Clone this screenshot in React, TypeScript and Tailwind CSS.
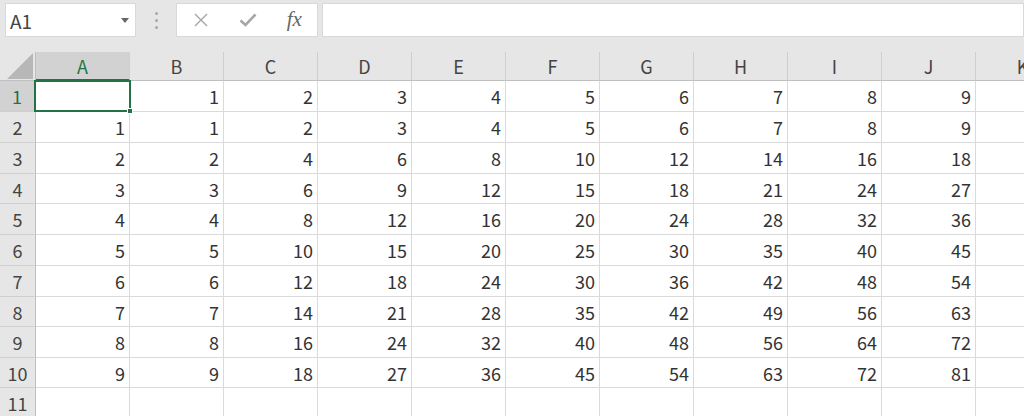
import React from "react";

const COLS = ["A", "B", "C", "D", "E", "F", "G", "H", "I", "J", "K"];
const ROW_H = ["h-[31px]", "h-[31px]", "h-[31px]", "h-[30px]", "h-[31px]", "h-[31px]", "h-[31px]", "h-[30px]", "h-[31px]", "h-[30px]", "h-[31px]"];

function cellValue(r: number, c: number): string {
  // r: 1..11, c: 0..10 (A..K)
  if (r === 11 || c === 10) return "";
  if (r === 1) return c === 0 ? "" : String(c);
  const a = r - 1;
  if (c === 0) return String(a);
  return String(a * c);
}

function XIcon() {
  return (
    <svg width="16" height="16" viewBox="0 0 16 16">
      <path d="M2 2 L14 14 M14 2 L2 14" stroke="#a6a6a6" strokeWidth="1.4" fill="none" />
    </svg>
  );
}

function CheckIcon() {
  return (
    <svg width="18" height="16" viewBox="0 0 18 16">
      <path d="M1.5 8.5 L6.5 13 L16.5 2.5" stroke="#a6a6a6" strokeWidth="2.6" fill="none" strokeLinejoin="miter" />
    </svg>
  );
}

export default function App() {
  return (
    <div className="w-[1024px] h-[416px] overflow-hidden bg-[#e6e6e6] font-['Noto_Sans_CJK_JP','Noto_Sans',sans-serif] select-none">
      {/* Top bar */}
      <div className="h-[52px] flex items-start pt-[3px]">
        <div className="ml-[5px] w-[131px] h-[34px] bg-white border border-[#d9d9d9] flex items-center justify-between pl-[4px] pr-[6px]">
          <span className="text-[19px] leading-none text-[#444]">A1</span>
          <svg width="8" height="5" viewBox="0 0 8 5">
            <path d="M0 0 L8 0 L4 5 Z" fill="#666" />
          </svg>
        </div>
        <div className="w-[40px] h-[34px] flex flex-col items-center justify-center gap-[4px]">
          <span className="w-[3px] h-[3px] rounded-full bg-[#a8a8a8]" />
          <span className="w-[3px] h-[3px] rounded-full bg-[#a8a8a8]" />
          <span className="w-[3px] h-[3px] rounded-full bg-[#a8a8a8]" />
        </div>
        <div className="w-[142px] h-[34px] bg-white border border-[#d9d9d9] flex items-center">
          <div className="w-[48px] flex justify-center">
            <XIcon />
          </div>
          <div className="w-[48px] flex justify-center">
            <CheckIcon />
          </div>
          <div className="w-[46px] flex justify-center">
            <span className="font-['Liberation_Serif',serif] italic text-[21px] leading-none text-[#666] -mt-[2px]">fx</span>
          </div>
        </div>
        <div className="ml-[4px] flex-1 h-[34px] bg-white border border-[#d9d9d9]" />
      </div>

      {/* Grid */}
      <div className="flex flex-col">
        {/* Column header */}
        <div className="h-[29px] flex">
          <div className="w-[36px] shrink-0 h-full border-r border-b border-[#bfbfbf] bg-[#e6e6e6] flex items-end justify-end pr-[2px] pb-[1px]">
            <svg width="26" height="26" viewBox="0 0 26 26">
              <path d="M26 0 L26 26 L0 26 Z" fill="#b7b7b7" />
            </svg>
          </div>
          {COLS.map((c, i) => (
            <div
              key={c}
              className={
                i === 0
                  ? "w-[94px] shrink-0 h-full border-r border-r-[#cfcfcf] border-b-2 border-b-[#217346] bg-[#d2d2d2] flex items-center justify-center text-[18px] leading-none text-[#217346]"
                  : "w-[94px] shrink-0 h-full border-r border-r-[#cfcfcf] border-b border-b-[#bfbfbf] bg-[#e6e6e6] flex items-center justify-center text-[18px] leading-none text-[#444]"
              }
            >
              {c}
            </div>
          ))}
        </div>

        {ROW_H.map((h, ri) => {
          const r = ri + 1;
          return (
            <div key={r} className={`${h} flex bg-white`}>
              <div
                className={
                  r === 1
                    ? "w-[36px] shrink-0 h-full border-r-2 border-r-[#217346] border-b border-b-[#cfcfcf] bg-[#d2d2d2] flex items-center justify-center text-[18px] leading-none text-[#217346]"
                    : "w-[36px] shrink-0 h-full border-r border-r-[#bfbfbf] border-b border-b-[#cfcfcf] bg-[#e6e6e6] flex items-center justify-center text-[18px] leading-none text-[#444]"
                }
              >
                {r}
              </div>
              {COLS.map((c, ci) => {
                const v = cellValue(r, ci);
                const sel = r === 1 && ci === 0;
                return (
                  <div
                    key={c}
                    className="relative w-[94px] shrink-0 h-full border-r border-b border-[#dadada] flex items-center justify-end pr-[4px] text-[18px] leading-none text-[#333]"
                  >
                    {v}
                    {sel && (
                      <div className="absolute left-[-2px] top-[-1px] right-[-2px] bottom-[-1px] border-2 border-[#217346] z-10">
                        <div className="absolute right-[-4px] bottom-[-4px] w-[6px] h-[6px] bg-[#217346] border border-white" />
                      </div>
                    )}
                  </div>
                );
              })}
            </div>
          );
        })}
      </div>
    </div>
  );
}
